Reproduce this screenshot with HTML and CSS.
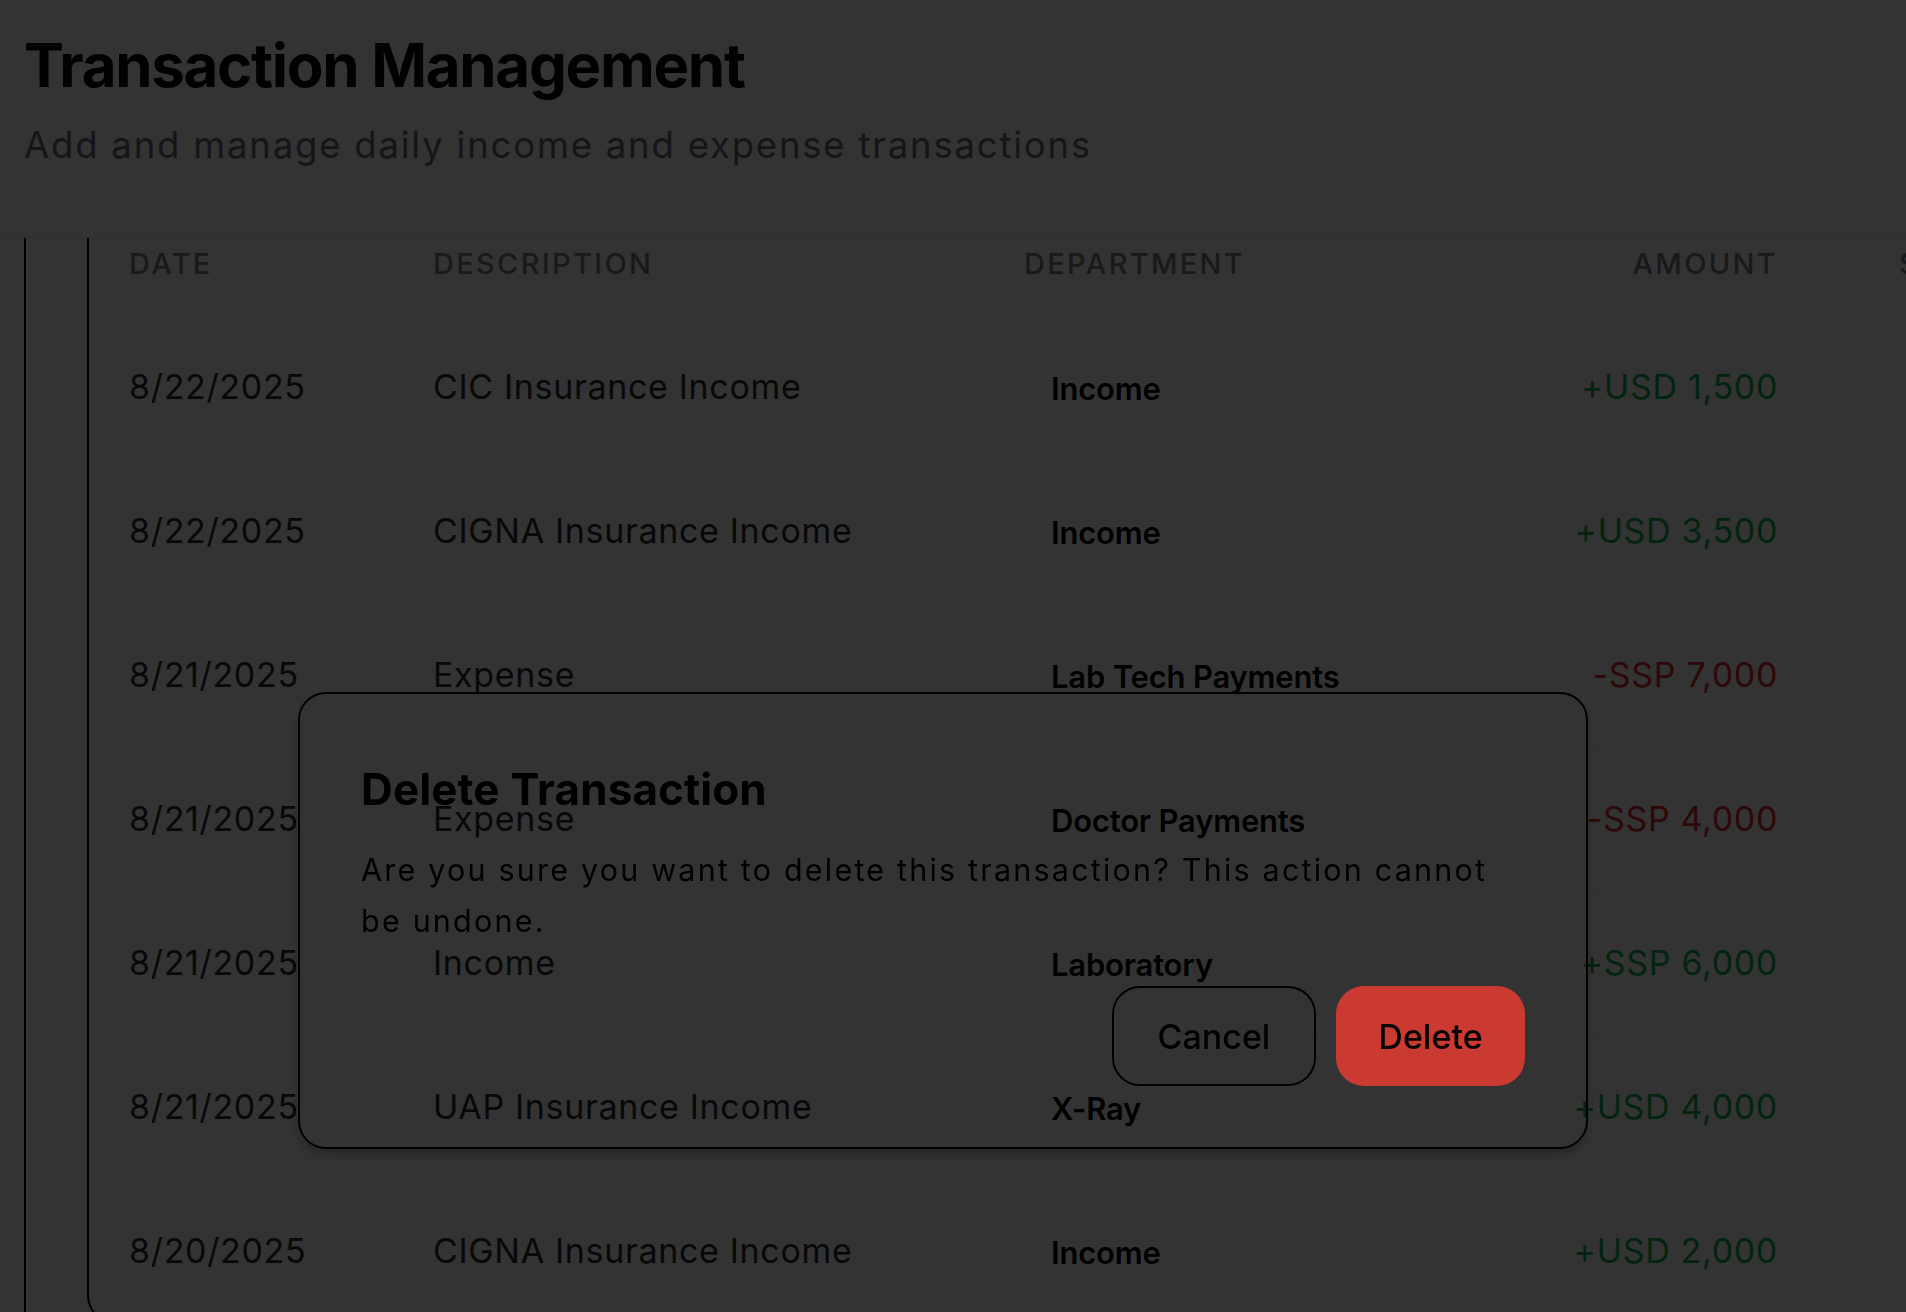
FILE: index.html
```html
<!DOCTYPE html>
<html lang="en">
<head>
<meta charset="utf-8">
<title>Transaction Management</title>
<link rel="stylesheet" href="styles.css">
</head>
<body>
<div class="app">
  <header class="page-header">
    <h1 class="page-title">Transaction Management</h1>
    <p class="page-subtitle">Add and manage daily income and expense transactions</p>
  </header>
  <main class="main">
    <div class="panel">
      <div class="card">
        <table class="tx-table">
          <colgroup>
            <col class="c-date"><col class="c-desc"><col class="c-dept"><col class="c-amt"><col class="c-status">
          </colgroup>
          <thead>
            <tr>
              <th>Date</th>
              <th>Description</th>
              <th>Department</th>
              <th class="right">Amount</th>
              <th class="status">Status</th>
            </tr>
          </thead>
          <tbody>
            <tr><td>8/22/2025</td><td>CIC Insurance Income</td><td><span class="badge">Income</span></td><td class="right amt-pos">+USD 1,500</td><td class="status"></td></tr>
            <tr><td>8/22/2025</td><td>CIGNA Insurance Income</td><td><span class="badge">Income</span></td><td class="right amt-pos">+USD 3,500</td><td class="status"></td></tr>
            <tr><td>8/21/2025</td><td>Expense</td><td><span class="badge">Lab Tech Payments</span></td><td class="right amt-neg">-SSP 7,000</td><td class="status"></td></tr>
            <tr><td>8/21/2025</td><td>Expense</td><td><span class="badge">Doctor Payments</span></td><td class="right amt-neg">-SSP 4,000</td><td class="status"></td></tr>
            <tr><td>8/21/2025</td><td>Income</td><td><span class="badge">Laboratory</span></td><td class="right amt-pos">+SSP 6,000</td><td class="status"></td></tr>
            <tr><td>8/21/2025</td><td>UAP Insurance Income</td><td><span class="badge">X-Ray</span></td><td class="right amt-pos">+USD 4,000</td><td class="status"></td></tr>
            <tr><td>8/20/2025</td><td>CIGNA Insurance Income</td><td><span class="badge">Income</span></td><td class="right amt-pos">+USD 2,000</td><td class="status"></td></tr>
          </tbody>
        </table>
      </div>
    </div>
  </main>
</div>

<div class="overlay"></div>

<div class="dialog" role="alertdialog" aria-labelledby="dlg-title">
  <h2 class="dialog-title" id="dlg-title">Delete Transaction</h2>
  <p class="dialog-text">Are you sure you want to delete this transaction? This action cannot be undone.</p>
  <div class="dialog-actions">
    <button class="btn btn-cancel" type="button">Cancel</button>
    <button class="btn btn-delete" type="button">Delete</button>
  </div>
</div>
</body>
</html>
```
FILE: styles.css
```css
* { box-sizing: border-box; }

html, body {
  margin: 0;
  padding: 0;
  height: 100%;
  overflow: hidden;
  background: #ffffff;
  font-family: Inter, "Noto Sans", "Liberation Sans", sans-serif;
  color: #09090b;
}

.app {
  display: flex;
  flex-direction: column;
  height: 100%;
}

.page-header {
  flex: none;
  height: 238px;
  padding: 29px 24px 0 24px;
  border-bottom: 1px solid #e5e5e5;
}

.page-title {
  margin: 0;
  font-size: 60px;
  line-height: 72px;
  font-weight: 700;
  letter-spacing: -1.3px;
  color: #09090b;
}

.page-subtitle {
  margin: 17px 0 0 0;
  font-size: 36.5px;
  line-height: 54px;
  font-weight: 400;
  letter-spacing: 1.8px;
  color: #6b6b75;
}

.main {
  flex: 1;
  padding-left: 24px;
  overflow: hidden;
}

.panel {
  height: 100%;
  border-left: 2px solid #000;
  padding-left: 61px;
}

.card {
  border-left: 2px solid #000;
  border-bottom: 2px solid #000;
  border-radius: 0 0 0 30px;
  overflow: hidden;
  width: 2200px;
}

.tx-table {
  border-collapse: collapse;
  table-layout: fixed;
  width: 2140px;
}

.c-date { width: 304px; }
.c-desc { width: 591px; }
.c-dept { width: 514px; }
.c-amt { width: 320px; }
.c-status { width: 411px; }

.tx-table th {
  height: 76px;
  padding: 6px 40px 30px 40px;
  text-align: left;
  vertical-align: top;
  font-size: 29px;
  line-height: 40px;
  font-weight: 500;
  letter-spacing: 0.08em;
  text-transform: uppercase;
  color: #7d7d88;
  white-space: nowrap;
}

.tx-table td {
  height: 144px;
  padding: 0 40px;
  vertical-align: middle;
  font-size: 34px;
  line-height: 48px;
  letter-spacing: 0.67px;
  color: #2a2a30;
  white-space: nowrap;
  border-top: 1px solid #f2f2f2;
}

.tx-table .right { text-align: right; }
.tx-table .status { padding-left: 81px; }

.badge {
  display: inline-block;
  padding: 4px 27px;
  margin-top: 4px;
  font-size: 31px;
  line-height: 40px;
  font-weight: 600;
  letter-spacing: -0.2px;
  color: #000;
}

.tx-table .amt-pos { color: #16ad4c; }
.tx-table .amt-neg { color: #e02828; }

.overlay {
  position: fixed;
  inset: 0;
  background: rgba(0, 0, 0, 0.8);
}

.dialog {
  position: fixed;
  left: 298px;
  top: 692px;
  width: 1290px;
  height: 457px;
  border: 2px solid #000;
  border-radius: 28px;
  padding: 69px 61px 61px 61px;
  background: transparent;
  box-shadow: 0 6px 10px rgba(0, 0, 0, 0.25);
  display: flex;
  flex-direction: column;
  color: #000;
}

.dialog-title {
  margin: 0;
  font-size: 44px;
  line-height: 53px;
  font-weight: 700;
  letter-spacing: 0.1px;
}

.dialog-text {
  margin: 29px 0 0 0;
  font-size: 30.5px;
  line-height: 50.6px;
  font-weight: 400;
  letter-spacing: 2.2px;
}

.dialog-actions {
  margin-top: auto;
  display: flex;
  justify-content: flex-end;
  gap: 20px;
}

.btn {
  height: 100px;
  border-radius: 28px;
  font-family: inherit;
  font-size: 34px;
  font-weight: 500;
  color: #000;
  cursor: pointer;
}

.btn-cancel {
  width: 204px;
  background: transparent;
  border: 2px solid #000;
}

.btn-delete {
  width: 189px;
  background: #cb3a31;
  border: none;
}
```
